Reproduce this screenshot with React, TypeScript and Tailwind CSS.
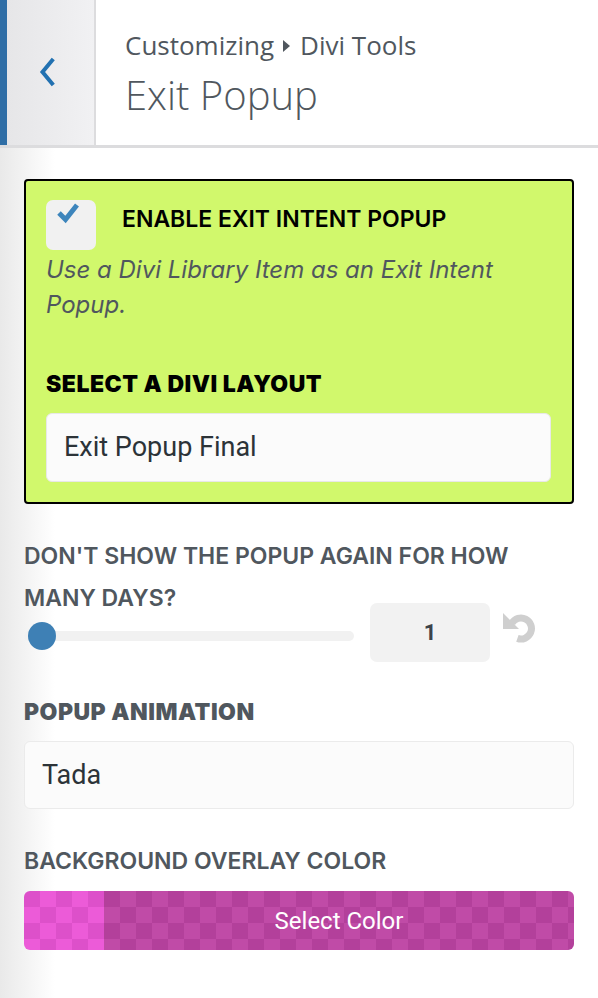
import React from "react";

export default function App() {
  return (
    <div className="w-[598px] h-[998px] overflow-hidden bg-[linear-gradient(to_right,#e9e9e9,#ffffff_55px)] font-['Inter',sans-serif]">
      {/* Header */}
      <div className="flex h-[148px] border-b-[3px] border-[#dcdcde] bg-white">
        <div className="w-[96px] flex items-center justify-center border-l-[7px] border-[#2f6ea6] border-r-2 border-r-[#dcdcde] bg-[linear-gradient(to_right,#e6e6e8,#f1f1f3)]">
          <svg width="20" height="30" viewBox="0 0 20 30" className="mr-[8px] mb-[2px]">
            <path d="M15 3.5 L5.5 15 L15 26.5" fill="none" stroke="#2271b1" strokeWidth="4" strokeLinecap="square" />
          </svg>
        </div>
        <div className="pl-[29px] pt-[27px] font-['Open_Sans',sans-serif] text-[#50575e]">
          <div className="text-[26px] leading-[36px] flex items-center">
            <span>Customizing</span>
            <svg width="10" height="14" viewBox="0 0 10 14" className="mx-[8px] mt-[2px]">
              <path d="M1 1 L8 7 L1 13 Z" fill="#50575e" />
            </svg>
            <span>Divi Tools</span>
          </div>
          <div className="mt-[8px] text-[40px] leading-[48px] font-light">Exit Popup</div>
        </div>
      </div>

      <div className="pt-[31px] px-[24px]">
        {/* Green box */}
        <div className="border-2 border-black rounded-[4px] bg-[#d1f86c] pt-[19px] pb-[20px] pl-[20px] pr-[21px]">
          <div className="flex items-start">
            <div className="w-[50px] h-[50px] rounded-[7px] bg-[#f1f1f1] pl-[10px] pt-[2px]">
              <svg width="24" height="22" viewBox="0 0 24 22">
                <path d="M3 11 L9.5 17.5 L21 3" fill="none" stroke="#3d85bc" strokeWidth="5" strokeLinejoin="miter" />
              </svg>
            </div>
            <div className="ml-[26px] mt-[4px] text-[23px] leading-[30px] font-semibold text-black">ENABLE EXIT INTENT POPUP</div>
          </div>
          <p className="mt-[2px] italic text-[24px] leading-[35px] text-[#50575e]">
            Use a Divi Library Item as an Exit Intent Popup.
          </p>
          <div className="mt-[49px] text-[23px] leading-[26px] font-black tracking-[0.5px] text-black">SELECT A DIVI LAYOUT</div>
          <div className="mt-[16px] h-[69px] rounded-[6px] border border-[#e8e8e8] bg-[#fbfbfb] flex items-center pl-[17px] font-['Roboto',sans-serif] text-[27px] text-[#2c3338]">
            Exit Popup Final
          </div>
        </div>

        {/* Days */}
        <div className="mt-[31px] text-[23px] leading-[42px] font-semibold text-[#50575e] pr-[40px]">
          DON'T SHOW THE POPUP AGAIN FOR HOW MANY DAYS?
        </div>
        <div className="-mt-[16px] flex items-center">
          <div className="relative w-[330px] h-[10px] mt-[6px] rounded-full bg-[#f1f1f1]">
            <div className="absolute left-[4px] top-[-9px] w-[28px] h-[28px] rounded-full bg-[#3e80b5]" />
          </div>
          <div className="ml-[16px] w-[120px] h-[59px] rounded-[7px] bg-[#f2f2f2] flex items-center justify-center font-['Roboto',sans-serif] font-bold text-[22px] text-[#3c434a]">
            1
          </div>
          <svg width="34" height="32" viewBox="0 0 34 32" className="ml-[12px] self-start mt-[10px]">
            <path d="M9.9 10.25 A10.5 10.5 0 1 1 15.4 25.4" fill="none" stroke="#cfcfcf" strokeWidth="7" />
            <path d="M1 0 L1 16 L17 16 Z" fill="#cfcfcf" />
          </svg>
        </div>

        {/* Animation */}
        <div className="mt-[37px] text-[23px] leading-[26px] font-black tracking-[0.5px] text-[#50575e]">POPUP ANIMATION</div>
        <div className="mt-[16px] h-[68px] rounded-[6px] border border-[#ebebeb] bg-[#fbfbfb] flex items-center pl-[17px] font-['Roboto',sans-serif] text-[27px] text-[#2c3338]">
          Tada
        </div>

        {/* Color */}
        <div className="mt-[39px] text-[23px] leading-[26px] font-semibold text-[#50575e]">BACKGROUND OVERLAY COLOR</div>
        <div className="mt-[17px] h-[59px] rounded-[6px] overflow-hidden flex">
          <div className="w-[80px] bg-[conic-gradient(#ec5bd8_25%,#dd50ca_0_50%,#ec5bd8_0_75%,#dd50ca_0)] bg-[length:32px_32px]" />
          <div className="flex-1 flex items-center justify-center bg-[conic-gradient(#c04ba7_25%,#b3409b_0_50%,#c04ba7_0_75%,#b3409b_0)] bg-[length:32px_32px] font-['Roboto',sans-serif] text-[24px] text-white">
            Select Color
          </div>
        </div>
      </div>
    </div>
  );
}
